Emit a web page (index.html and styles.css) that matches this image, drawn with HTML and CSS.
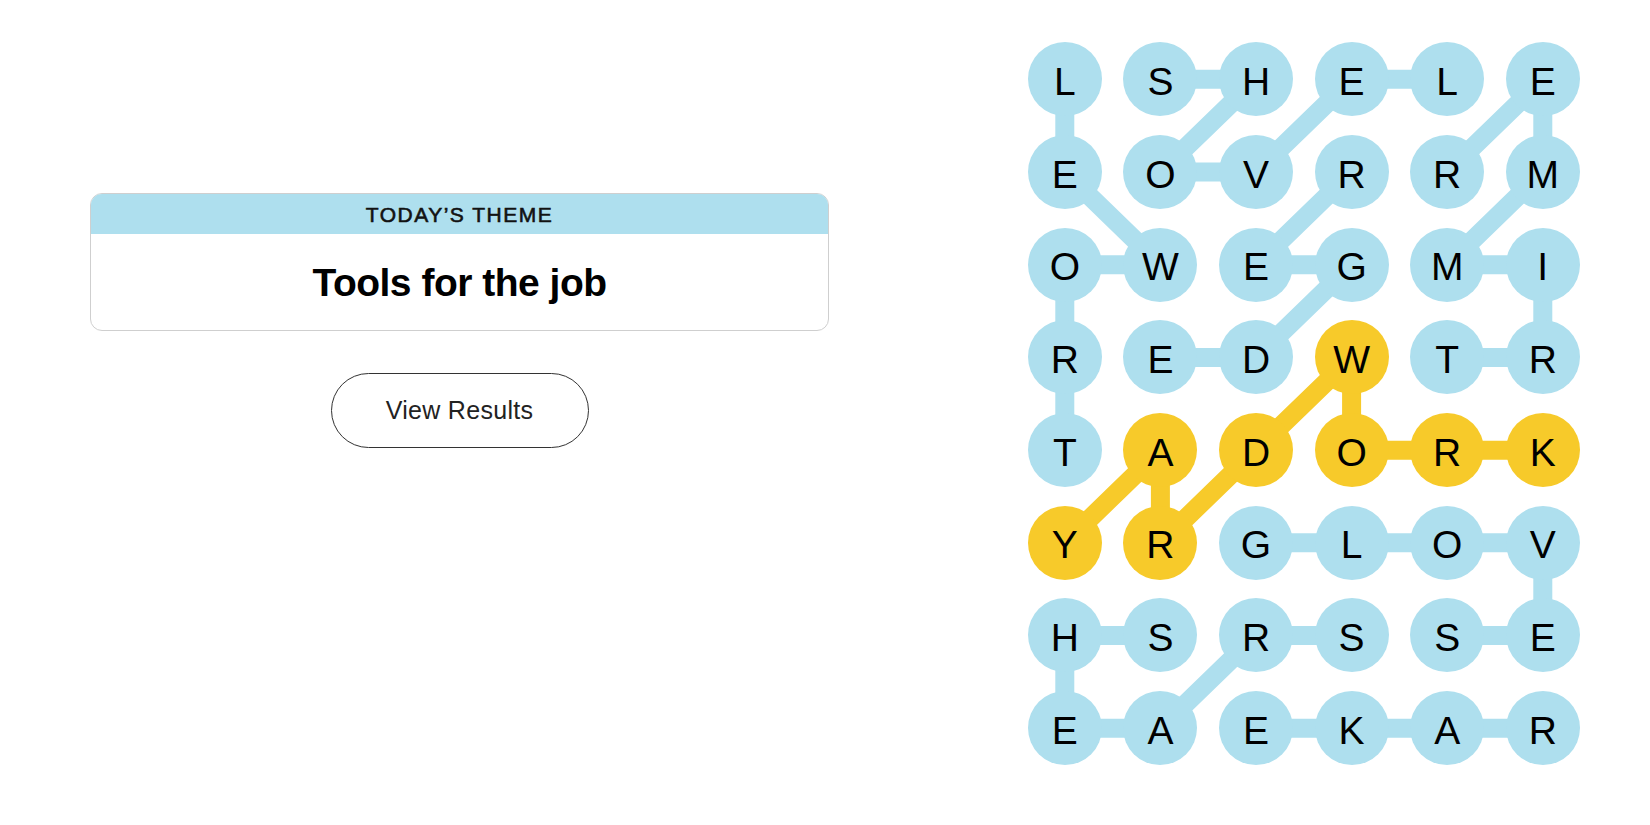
FILE: index.html
```html
<!DOCTYPE html>
<html lang="en">
<head>
<meta charset="utf-8">
<title>Strands</title>
<link rel="stylesheet" href="styles.css">
</head>
<body>
<main class="page">
  <section class="side">
    <div class="theme-card">
      <div class="theme-head">TODAY’S THEME</div>
      <div class="theme-body"><h1 class="theme-title">Tools for the job</h1></div>
    </div>
    <button class="results-btn" type="button">View Results</button>
  </section>

  <section class="board">
    <svg class="links" viewBox="0 0 573.6 741.6" width="573.6" height="741.6" aria-hidden="true">
      <g class="blue">
        <polyline points="47.8,417.15 47.8,324.45 47.8,231.75 143.4,231.75 47.8,139.05 47.8,46.35"/>
        <polyline points="143.4,46.35 239,46.35 143.4,139.05 239,139.05 334.6,46.35 430.2,46.35"/>
        <polyline points="430.2,324.45 525.8,324.45 525.8,231.75 430.2,231.75 525.8,139.05 525.8,46.35 430.2,139.05"/>
        <polyline points="143.4,324.45 239,324.45 334.6,231.75 239,231.75 334.6,139.05"/>
        <polyline points="239,509.85 334.6,509.85 430.2,509.85 525.8,509.85 525.8,602.55 430.2,602.55"/>
        <polyline points="143.4,602.55 47.8,602.55 47.8,695.25 143.4,695.25 239,602.55 334.6,602.55"/>
        <polyline points="525.8,695.25 430.2,695.25 334.6,695.25 239,695.25"/>
      </g>
      <g class="gold">
        <polyline points="47.8,509.85 143.4,417.15 143.4,509.85 239,417.15 334.6,324.45 334.6,417.15 430.2,417.15 525.8,417.15"/>
      </g>
    </svg>
    <div class="grid">
      <div class="cell"><span class="dot">L</span></div>
      <div class="cell"><span class="dot">S</span></div>
      <div class="cell"><span class="dot">H</span></div>
      <div class="cell"><span class="dot">E</span></div>
      <div class="cell"><span class="dot">L</span></div>
      <div class="cell"><span class="dot">E</span></div>

      <div class="cell"><span class="dot">E</span></div>
      <div class="cell"><span class="dot">O</span></div>
      <div class="cell"><span class="dot">V</span></div>
      <div class="cell"><span class="dot">R</span></div>
      <div class="cell"><span class="dot">R</span></div>
      <div class="cell"><span class="dot">M</span></div>

      <div class="cell"><span class="dot">O</span></div>
      <div class="cell"><span class="dot">W</span></div>
      <div class="cell"><span class="dot">E</span></div>
      <div class="cell"><span class="dot">G</span></div>
      <div class="cell"><span class="dot">M</span></div>
      <div class="cell"><span class="dot">I</span></div>

      <div class="cell"><span class="dot">R</span></div>
      <div class="cell"><span class="dot">E</span></div>
      <div class="cell"><span class="dot">D</span></div>
      <div class="cell"><span class="dot span">W</span></div>
      <div class="cell"><span class="dot">T</span></div>
      <div class="cell"><span class="dot">R</span></div>

      <div class="cell"><span class="dot">T</span></div>
      <div class="cell"><span class="dot span">A</span></div>
      <div class="cell"><span class="dot span">D</span></div>
      <div class="cell"><span class="dot span">O</span></div>
      <div class="cell"><span class="dot span">R</span></div>
      <div class="cell"><span class="dot span">K</span></div>

      <div class="cell"><span class="dot span">Y</span></div>
      <div class="cell"><span class="dot span">R</span></div>
      <div class="cell"><span class="dot">G</span></div>
      <div class="cell"><span class="dot">L</span></div>
      <div class="cell"><span class="dot">O</span></div>
      <div class="cell"><span class="dot">V</span></div>

      <div class="cell"><span class="dot">H</span></div>
      <div class="cell"><span class="dot">S</span></div>
      <div class="cell"><span class="dot">R</span></div>
      <div class="cell"><span class="dot">S</span></div>
      <div class="cell"><span class="dot">S</span></div>
      <div class="cell"><span class="dot">E</span></div>

      <div class="cell"><span class="dot">E</span></div>
      <div class="cell"><span class="dot">A</span></div>
      <div class="cell"><span class="dot">E</span></div>
      <div class="cell"><span class="dot">K</span></div>
      <div class="cell"><span class="dot">A</span></div>
      <div class="cell"><span class="dot">R</span></div>
    </div>
  </section>
</main>
</body>
</html>
```

FILE: styles.css
```css
* { box-sizing: border-box; }

html, body {
  margin: 0;
  padding: 0;
  background: #ffffff;
}

body {
  font-family: "Liberation Sans", Arial, sans-serif;
  color: #000;
  width: 1650px;
  height: 825px;
  overflow: hidden;
}

.page {
  display: flex;
  align-items: flex-start;
}

.side {
  width: 739px;
  margin-left: 90px;
  padding-top: 193px;
  display: flex;
  flex-direction: column;
  align-items: center;
}

.theme-card {
  width: 100%;
  border: 1px solid #cfcfcf;
  border-radius: 12px;
  overflow: hidden;
}

.theme-head {
  height: 40px;
  background: #aedfee;
  display: flex;
  align-items: center;
  justify-content: center;
  font-family: "Liberation Sans", Arial, sans-serif;
  font-size: 21px;
  font-weight: 400;
  letter-spacing: 1.5px;
  color: #121212;
  -webkit-text-stroke: 0.6px #121212;
  padding-top: 1px;
}

.theme-body {
  height: 96px;
  display: flex;
  align-items: center;
  justify-content: center;
}

.theme-title {
  margin: 0;
  font-family: "Liberation Sans", Arial, sans-serif;
  font-size: 39px;
  font-weight: 700;
  letter-spacing: -0.5px;
  color: #000;
  padding-top: 2px;
}

.results-btn {
  margin-top: 42px;
  width: 258px;
  height: 75px;
  border: 1px solid #333;
  border-radius: 38px;
  background: #fff;
  font-family: "Liberation Sans", Arial, sans-serif;
  font-size: 25px;
  letter-spacing: 0.3px;
  color: #222;
  padding: 0;
}

.board {
  position: relative;
  margin-left: 188px;
  margin-top: 33px;
  width: 573.6px;
  height: 741.6px;
}

.links {
  position: absolute;
  left: 0;
  top: 0;
}

.links polyline {
  fill: none;
  stroke-width: 19;
  stroke-linejoin: round;
}

.links .blue polyline { stroke: #aedfee; }
.links .gold polyline { stroke: #f7ca2a; }

.grid {
  position: relative;
  display: grid;
  grid-template-columns: repeat(6, 95.6px);
  grid-template-rows: repeat(8, 92.7px);
}

.cell {
  display: flex;
  align-items: center;
  justify-content: center;
}

.dot {
  width: 74px;
  height: 74px;
  border-radius: 50%;
  background: #aedfee;
  display: flex;
  align-items: center;
  justify-content: center;
  font-family: "Liberation Sans", Arial, sans-serif;
  font-size: 39px;
  font-weight: 400;
  color: #000;
  padding-top: 5px;
}

.dot.span { background: #f7ca2a; }
```
